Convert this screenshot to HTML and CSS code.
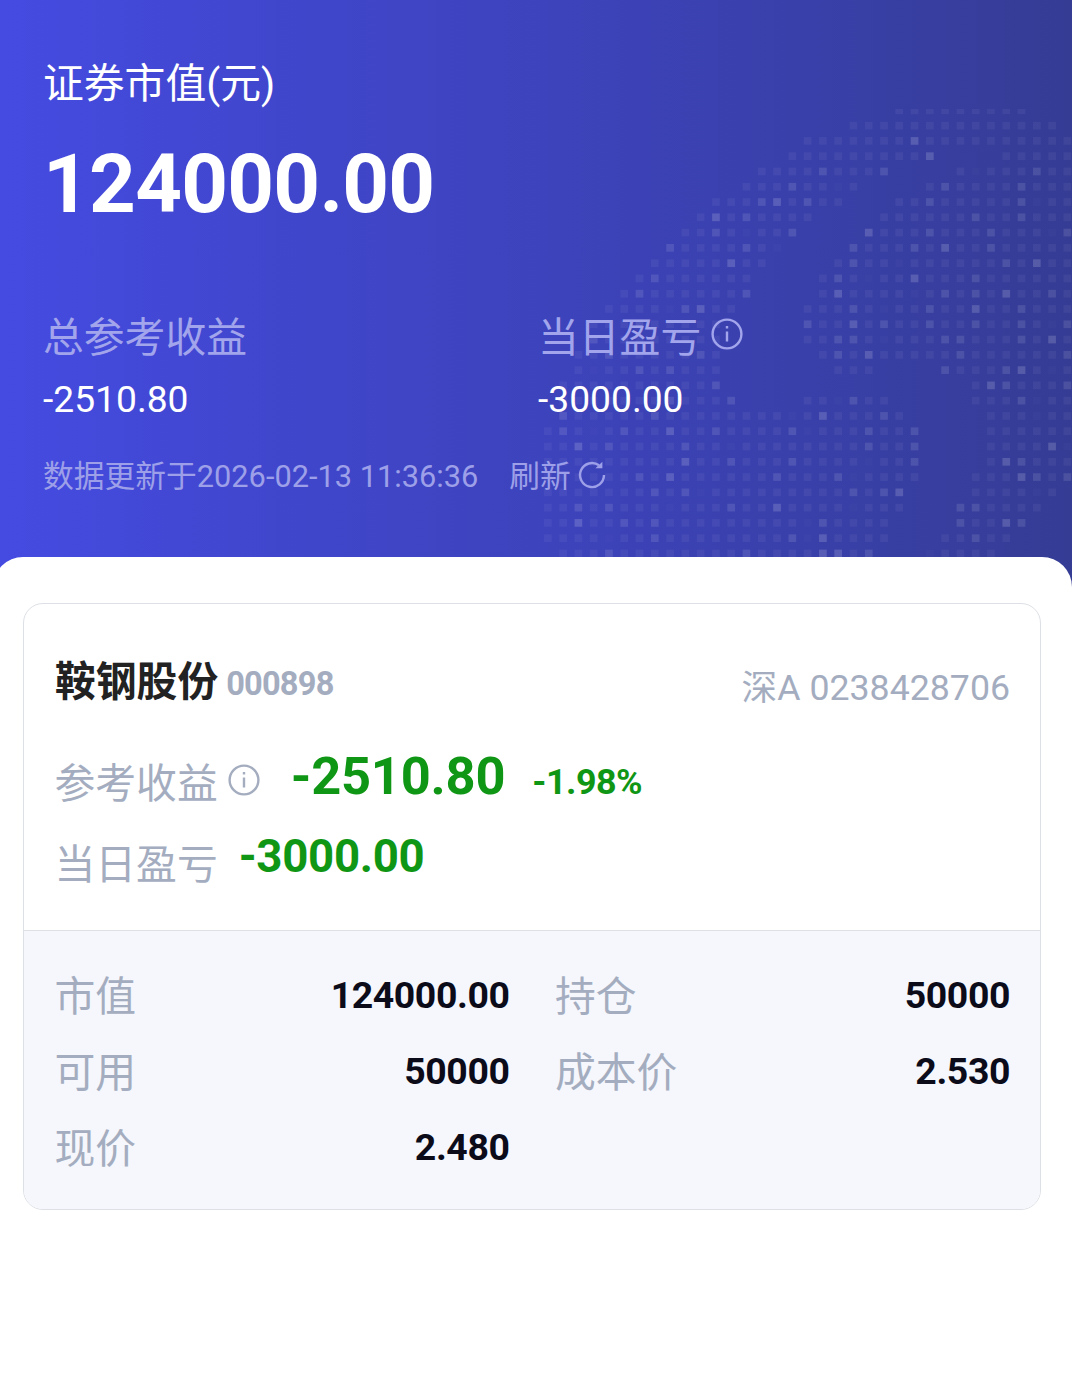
FILE: index.html
```
<!DOCTYPE html>
<html lang="zh-CN">
<head>
    <meta charset="UTF-8">
    <title>证券市值</title>
    <link rel="stylesheet" href="styles.css">
</head>
<body>
    <div class="header">
        <svg class="globe" id="globe" width="528" height="449" viewBox="0 0 528 449"></svg>
        <div class="header-title">证券市值(元)</div>
        <div class="header-total">124000.00</div>
        <div class="stats">
            <div class="stat">
                <div class="stat-label">总参考收益</div>
                <div class="stat-value">-2510.80</div>
            </div>
            <div class="stat">
                <div class="stat-label">当日盈亏
                    <svg class="info-icon" viewBox="0 0 32 32">
                        <circle cx="16" cy="16" r="14.4" />
                        <path d="M16 13.5v10M16 8v2.6" />
                    </svg>
                </div>
                <div class="stat-value">-3000.00</div>
            </div>
        </div>
        <div class="update">
            <span class="update-time">数据更新于2026-02-13 11:36:36</span>
            <span class="refresh">刷新</span>
            <svg class="refresh-icon" viewBox="0 0 28 28">
                <path d="M26 14a12 12 0 1 1-5-9.7" />
                <path class="arrow" d="M24.4 0.8v6.4h-7z" />
            </svg>
        </div>
    </div>

    <div class="sheet">
        <div class="card">
            <div class="card-top">
                <div class="card-head">
                    <span class="stock-name">鞍钢股份</span>
                    <span class="stock-code">000898</span>
                    <span class="account">深A 0238428706</span>
                </div>
                <div class="profit-row">
                    <span class="label">参考收益</span>
                    <svg class="info-icon" viewBox="0 0 32 32">
                        <circle cx="16" cy="16" r="14.4" />
                        <path d="M16 13.5v10M16 8v2.6" />
                    </svg>
                    <span class="profit">-2510.80</span>
                    <span class="percent">-1.98%</span>
                </div>
                <div class="profit-row">
                    <span class="label">当日盈亏</span>
                    <span class="day-profit">-3000.00</span>
                </div>
            </div>
            <div class="details">
                <div class="detail"><span class="label">市值</span><b>124000.00</b></div>
                <div class="detail"><span class="label">持仓</span><b>50000</b></div>
                <div class="detail"><span class="label">可用</span><b>50000</b></div>
                <div class="detail"><span class="label">成本价</span><b>2.530</b></div>
                <div class="detail"><span class="label">现价</span><b>2.480</b></div>
            </div>
        </div>
    </div>

    <script>
        // Dotted globe: "." is empty, a-d go from faint to bright
        const rows = [
            ".......................bbbbbbbbb...",
            "....................bbbbbbbbbbbbbb.",
            ".................bbbbbbbdbbbbbbbbbb",
            "................bbbbbbbbbd....bbbbb",
            "..............bbbbcbbbc....babbbcbb",
            ".............bbbcbbab....bcbbbbcbbb",
            "...........bbbcdbcbb...bbcbbbbbcabb",
            "..........bdbcbbbb....bbbbbbcbbcbbb",
            ".........bbcbabbc....dbbbcbbbcbbbac",
            "........cbbbbcba....cbbbcbdbbcbbbbb",
            ".......bbbbbdbb....bcbbabbbbbbcbdbb",
            "......bcbbbbbb....bcbabbdbbbcbbbbbb",
            ".....bcbbbbbbc....bdbbbbabcbcbdbbcb",
            "....bbbbacdbb....bbbcbabbcbbdbbcbbb",
            "...bbbcbbbbb.....cbbdbcbbcbbcbbcbac",
            "...cbbbbbbbb.....bbccbabbbccbbbcbdb",
            "..bbcbbbbbcb......bcbdbbbbbcbbbbbbc",
            "..babbcbcbbb.......bbb....cbbbcdbab",
            ".bbbbbbbbbbc................bdcbbbc",
            ".bbbbbbbcbbbc....bbacbb.....bbbcabb",
            ".cbbbbbcbbbbbbbbabdbbbcb.....bbbabb",
            "bcbabcbbdbbcbbbbcabbbcbbc....bbbbbb",
            "bbdbcbbbbcbbabbbbbbbbcbbc....bbbbda",
            "bbbbbbbbbdbbcbbbcbbbbabbc....bdcbbb",
            "bbbbbbcbdbbbbbbcbbbcabbbb...bbbdcbc",
            "bbbbbbbcbcabbbbbbbbbcbcd....bbbbab.",
            "bbcbcbbbabbbcbbdbbbbabbb...ccbbbb..",
            "bbdbbcbcbbbbbbbbbacbbbb....cbbdc...",
            "bbbbabbcbbbbbbbbcadbbbb...bbcbb....",
            ".bbbcbbbbbbbbcbbbbddbc...abbbb....."
        ];
        const opacity = { a: 0.018, b: 0.05, c: 0.11, d: 0.16 };
        const step = 15.28;
        let dots = "";

        rows.forEach((row, y) => {
            for (let x = 0; x < row.length; x++) {
                if (row[x] === ".") continue;
                dots += `<rect x="${(x * step).toFixed(2)}" y="${(y * step - 2.5).toFixed(2)}" width="7.7" height="7.7" fill="#fff" fill-opacity="${opacity[row[x]]}"/>`;
            }
        });

        document.getElementById("globe").innerHTML = dots;
    </script>
</body>
</html>
```
FILE: styles.css
```
* {
    box-sizing: border-box;
}

body {
    margin: 0;
    background-color: #fff;
    font-family: Roboto, "Noto Sans CJK SC", sans-serif;
    font-size: 40.8px;
    overflow-x: hidden;
}

.header {
    position: relative;
    padding: 52px 43px 100px;
    background: linear-gradient(90deg, #454be1 0%, #4147cf 22%, #3d43bb 52%, #383fa4 82%, #353c94 100%);
    color: #fff;
}

.globe {
    position: absolute;
    top: 109px;
    right: 0;
}

.header-title,
.header-total,
.stats,
.update {
    position: relative;
}

.header-title {
    line-height: 64px;
}

.header-total {
    margin-top: 18px;
    font-size: 81.6px;
    font-weight: 700;
    line-height: 100px;
    letter-spacing: -0.75px;
}

.stats {
    display: grid;
    grid-template-columns: 495px 1fr;
    margin-top: 74px;
}

.stat-label {
    display: flex;
    align-items: center;
    height: 60px;
    line-height: 60px;
    color: #a2a5ec;
}

.stat-value {
    margin-top: 6px;
    font-size: 37.2px;
    line-height: 50px;
}

.info-icon {
    width: 32px;
    height: 32px;
    margin-left: 10px;
    fill: none;
    stroke: currentColor;
    stroke-width: 2.4;
}

.stat-label .info-icon {
    margin-bottom: 8px;
}

.update {
    display: flex;
    align-items: center;
    margin-top: 33px;
    font-size: 30.75px;
    line-height: 40px;
    color: #9da0e8;
}

.refresh {
    margin-left: 31px;
}

.refresh-icon {
    width: 28px;
    height: 28px;
    margin: 0 0 4px 7px;
    fill: none;
    stroke: currentColor;
    stroke-width: 2.4;
}

.refresh-icon .arrow {
    fill: currentColor;
    stroke: none;
}

.sheet {
    position: relative;
    height: 842px;
    margin: -40px 0 0 -7px;
    padding: 46px 31px 0 30px;
    border-radius: 30px 30px 0 0;
    background-color: #fff;
}

.card {
    border: 1px solid #dde0e5;
    border-radius: 20px;
    overflow: hidden;
}

.card-top {
    height: 326px;
    padding: 48px 30px 0 31px;
}

.card-head {
    display: flex;
    align-items: flex-start;
    height: 60px;
    line-height: 60px;
}

.stock-name {
    color: #222;
    font-weight: 700;
}

.stock-code {
    margin: 2px 0 0 8px;
    color: #a4adbf;
    font-size: 32.6px;
    font-weight: 700;
    letter-spacing: -0.8px;
}

.account {
    margin: 6px 0 0 auto;
    color: #a4adbf;
    font-size: 35.7px;
}

.label {
    margin-left: -0.5px;
    color: #a4adbf;
}

.profit-row {
    display: flex;
    align-items: center;
    height: 80px;
    margin-top: 24px;
    line-height: 60px;
    color: #0f9614;
    font-weight: 700;
}

.profit-row + .profit-row {
    margin-top: 1px;
}

.profit-row .label {
    padding-top: 16px;
    font-weight: 400;
}

.profit-row .info-icon {
    margin-top: 8px;
    color: #a4adbf;
}

.profit {
    margin-left: 31px;
    font-size: 52.4px;
    letter-spacing: -0.2px;
}

.percent {
    margin: 12px 0 0 27px;
    font-size: 35.9px;
    letter-spacing: -0.5px;
}

.day-profit {
    margin-left: 21px;
    font-size: 45.6px;
    letter-spacing: -0.3px;
}

.details {
    display: grid;
    grid-template-columns: 1fr 1fr;
    column-gap: 46px;
    padding: 26px 30px 24px 31px;
    border-top: 1px solid #dde0e5;
    background-color: #f5f7fc;
}

.detail {
    display: flex;
    justify-content: space-between;
    align-items: center;
    height: 76px;
    line-height: 60px;
}

.detail .label {
    padding-top: 3px;
}

.detail b {
    color: #0b0b1a;
    font-size: 37.4px;
    letter-spacing: -0.4px;
}
```
